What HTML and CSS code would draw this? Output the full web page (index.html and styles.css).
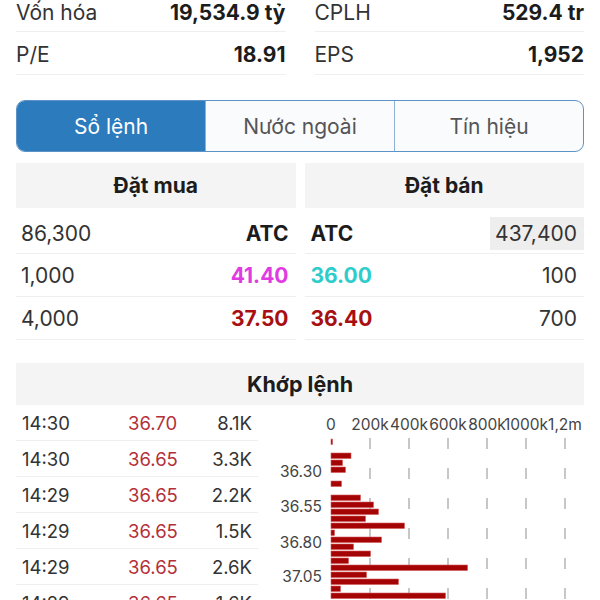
FILE: index.html
```html
<!DOCTYPE html>
<html lang="vi">
<head>
    <meta charset="UTF-8">
    <meta name="viewport" content="width=device-width, initial-scale=1.0">
    <title>Chi tiết cổ phiếu</title>
    <link rel="stylesheet" href="styles.css">
</head>
<body>
    <div class="screen">
        <!-- Chỉ số cơ bản -->
        <div class="stats">
            <div class="stat"><span class="stat-label">Vốn hóa</span><span class="stat-value">19,534.9 tỷ</span></div>
            <div class="stat"><span class="stat-label">CPLH</span><span class="stat-value">529.4 tr</span></div>
            <div class="stat"><span class="stat-label">P/E</span><span class="stat-value">18.91</span></div>
            <div class="stat"><span class="stat-label">EPS</span><span class="stat-value">1,952</span></div>
        </div>

        <!-- Tabs -->
        <div class="tabs">
            <div class="tab active">Sổ lệnh</div>
            <div class="tab">Nước ngoài</div>
            <div class="tab">Tín hiệu</div>
        </div>

        <!-- Sổ lệnh -->
        <div class="book">
            <div class="book-side">
                <div class="book-head">Đặt mua</div>
                <div class="book-row first"><span>86,300</span><span class="bold">ATC</span></div>
                <div class="book-row"><span>1,000</span><span class="bold purple">41.40</span></div>
                <div class="book-row"><span>4,000</span><span class="bold red">37.50</span></div>
            </div>
            <div class="book-side sell">
                <div class="book-head">Đặt bán</div>
                <div class="book-row first"><span class="bold">ATC</span><span class="highlight">437,400</span></div>
                <div class="book-row"><span class="bold cyan">36.00</span><span>100</span></div>
                <div class="book-row"><span class="bold red">36.40</span><span>700</span></div>
            </div>
        </div>

        <!-- Khớp lệnh -->
        <div class="match">
            <div class="match-head">Khớp lệnh</div>
            <div class="match-body">
                <div class="trades">
                    <div class="trade"><span>14:30</span><span class="price">36.70</span><span class="vol">8.1K</span></div>
                    <div class="trade"><span>14:30</span><span class="price">36.65</span><span class="vol">3.3K</span></div>
                    <div class="trade"><span>14:29</span><span class="price">36.65</span><span class="vol">2.2K</span></div>
                    <div class="trade"><span>14:29</span><span class="price">36.65</span><span class="vol">1.5K</span></div>
                    <div class="trade"><span>14:29</span><span class="price">36.65</span><span class="vol">2.6K</span></div>
                    <div class="trade"><span>14:29</span><span class="price">36.65</span><span class="vol">1.6K</span></div>
                </div>

                <svg class="chart" width="326" height="200" viewBox="0 0 326 200">
                    <g class="axis-x">
                        <text x="73" y="27">0</text>
                        <text x="112" y="27">200k</text>
                        <text x="151" y="27">400k</text>
                        <text x="190" y="27">600k</text>
                        <text x="229" y="27">800k</text>
                        <text x="268" y="27">1000k</text>
                        <text x="307" y="27">1,2m</text>
                    </g>
                    <g class="grid">
                        <line x1="112" y1="35" x2="112" y2="200"/>
                        <line x1="151" y1="35" x2="151" y2="200"/>
                        <line x1="190" y1="35" x2="190" y2="200"/>
                        <line x1="229" y1="35" x2="229" y2="200"/>
                        <line x1="268" y1="35" x2="268" y2="200"/>
                        <line x1="307" y1="35" x2="307" y2="200"/>
                    </g>
                    <g class="axis-y">
                        <text x="64" y="74">36.30</text>
                        <text x="64" y="109">36.55</text>
                        <text x="64" y="145">36.80</text>
                        <text x="64" y="179">37.05</text>
                    </g>
                    <g class="bars">
                        <rect x="73" y="36" width="1.6" height="5.5"/>
                        <rect x="73" y="50" width="20" height="5.5"/>
                        <rect x="73" y="57" width="11.5" height="5.5"/>
                        <rect x="73" y="64" width="14.5" height="5.5"/>
                        <rect x="73" y="78" width="10.5" height="5.5"/>
                        <rect x="73" y="92" width="29.5" height="5.5"/>
                        <rect x="73" y="99" width="42.5" height="5.5"/>
                        <rect x="73" y="106" width="47.5" height="5.5"/>
                        <rect x="73" y="113" width="34.5" height="5.5"/>
                        <rect x="73" y="120" width="73.5" height="5.5"/>
                        <rect x="73" y="127" width="3.5" height="5.5"/>
                        <rect x="73" y="134" width="50.5" height="5.5"/>
                        <rect x="73" y="141" width="22.5" height="5.5"/>
                        <rect x="73" y="148" width="39.5" height="5.5"/>
                        <rect x="73" y="155" width="17.5" height="5.5"/>
                        <rect x="73" y="162" width="136.5" height="5.5"/>
                        <rect x="73" y="169" width="35.5" height="5.5"/>
                        <rect x="73" y="176" width="67.5" height="5.5"/>
                        <rect x="73" y="183" width="9.5" height="5.5"/>
                        <rect x="73" y="190" width="114.5" height="5.5"/>
                    </g>
                </svg>
            </div>
        </div>
    </div>
</body>
</html>
```

FILE: styles.css
```css
* {
    box-sizing: border-box;
    margin: 0;
    padding: 0;
}

:root {
    --tab-blue: #2b7bbd;
    --tab-border: #5d93c6;
    --line: #efefef;
    --head-bg: #f4f4f4;
    --text: #2a2a2a;
    --red: #a80f12;
    --purple: #e03be0;
    --cyan: #30cccc;
}

body {
    margin: 0;
    background: #ffffff;
    font-family: Inter, "Liberation Sans", sans-serif;
    color: var(--text);
    overflow: hidden;
}

.screen {
    width: 600px;
    height: 600px;
    padding: 0 16px;
    overflow: hidden;
}

/* stats */
.stats {
    display: grid;
    grid-template-columns: 1fr 1fr;
    column-gap: 29px;
    margin-top: -8px;
}

.stat {
    display: flex;
    justify-content: space-between;
    align-items: center;
    height: 43px;
    padding-top: 3px;
    border-bottom: 1px solid var(--line);
    font-size: 21px;
}

.stat:nth-child(-n+2) {
    height: 40px;
    padding-top: 2px;
}

.stat-label {
    color: #333;
}

.stat-value {
    font-weight: 700;
    color: #1c1c1c;
}

/* tabs */
.tabs {
    display: flex;
    height: 52px;
    margin-top: 25px;
    border: 1.5px solid var(--tab-border);
    border-radius: 9px;
    overflow: hidden;
    background: #f9fbfd;
}

.tab {
    flex: 1;
    display: flex;
    align-items: center;
    justify-content: center;
    font-size: 21px;
    color: #555;
    border-left: 1.5px solid #8fb2d4;
}

.tab:first-child {
    border-left: none;
}

.tab.active {
    background: var(--tab-blue);
    color: #ffffff;
}

/* order book */
.book {
    display: grid;
    grid-template-columns: 1fr 1fr;
    column-gap: 9px;
    margin-top: 11px;
}

.book-head {
    height: 45px;
    display: flex;
    align-items: center;
    justify-content: center;
    background: var(--head-bg);
    font-size: 21px;
    font-weight: 700;
    color: #1c1c1c;
}

.book-row {
    display: flex;
    justify-content: space-between;
    align-items: center;
    height: 43px;
    padding: 0 7px 0 5px;
    border-bottom: 1px solid var(--line);
    font-size: 21px;
    color: #333;
}

.book-row.first {
    height: 46px;
    padding-top: 5px;
}

.sell .book-row {
    padding: 0 7px 0 6px;
}

.sell .book-row.first {
    padding-top: 5px;
}

.bold {
    font-weight: 700;
    color: #1c1c1c;
}

.purple {
    color: var(--purple);
}

.cyan {
    color: var(--cyan);
}

.red {
    color: var(--red);
}

.highlight {
    background: #eeeeee;
    line-height: 33px;
    padding: 0 7px 0 5px;
    margin-right: -7px;
}

/* matched orders */
.match {
    margin-top: 23px;
}

.match-head {
    height: 42px;
    display: flex;
    align-items: center;
    justify-content: center;
    background: var(--head-bg);
    font-size: 21.5px;
    font-weight: 700;
    color: #1c1c1c;
}

.match-body {
    display: flex;
}

.trades {
    width: 242px;
    flex-shrink: 0;
}

.trade {
    display: grid;
    grid-template-columns: 106px 1fr auto;
    align-items: center;
    height: 36px;
    padding: 0 6px;
    border-bottom: 1px solid var(--line);
    font-size: 18.5px;
    color: #333;
}

.trade .price {
    color: #b3303b;
}

.chart {
    display: block;
    flex-shrink: 0;
    margin-top: -2px;
}

.chart text {
    font-family: Inter, "Liberation Sans", sans-serif;
    font-size: 15.5px;
    fill: #444;
}

.axis-x text {
    text-anchor: middle;
}

.axis-y text {
    text-anchor: end;
}

.grid line {
    stroke: #b5b5b5;
    stroke-width: 1.5;
    stroke-dasharray: 11 19;
}

.bars rect {
    fill: #a50404;
    stroke: #d25a5a;
    stroke-width: 0.6;
}
```
